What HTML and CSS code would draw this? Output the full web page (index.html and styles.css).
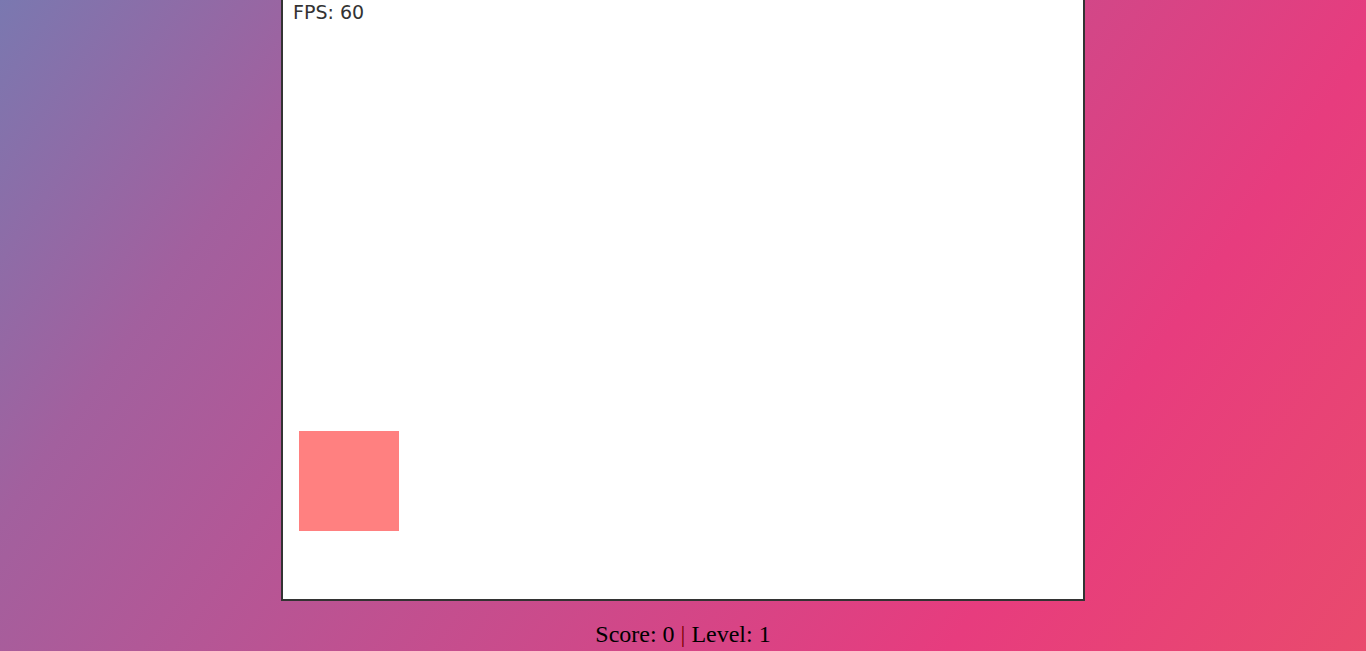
FILE: index.html
```html
<!DOCTYPE html>
<html>
<head>
<meta charset="utf-8">
<link rel="stylesheet" href="styles.css">
</head>
<body>
<div class="game">
  <div class="fps">FPS: 60</div>
  <div class="player"></div>
</div>
<div class="hud">Score: 0 <span class="sep">|</span> Level: 1</div>
</body>
</html>
```
FILE: styles.css
```css
html, body {
  margin: 0;
  height: 100%;
}
body {
  overflow: hidden;
  display: flex;
  flex-direction: column;
  align-items: center;
  justify-content: center;
  background: linear-gradient(125deg, #7a78b0 0%, #a2609e 20%, #e73c7e 77%, #e94a6d 100%);
  font-family: "Liberation Serif", serif;
}
.game {
  position: relative;
  flex: none;
  width: 800px;
  height: 600px;
  border: 2px solid #333;
  background: #fff;
}
.fps {
  position: absolute;
  left: 10px;
  top: 4px;
  font-family: "DejaVu Sans", sans-serif;
  font-size: 19px;
  line-height: 19px;
  color: #333;
}
.player {
  position: absolute;
  left: 16px;
  top: 432px;
  width: 100px;
  height: 100px;
  background: #ff8080;
}
.hud {
  flex: none;
  margin: 20px 0 7px;
  font-size: 24px;
  line-height: 26px;
  color: #000;
}
.sep {
  color: #7a0000;
}
```
